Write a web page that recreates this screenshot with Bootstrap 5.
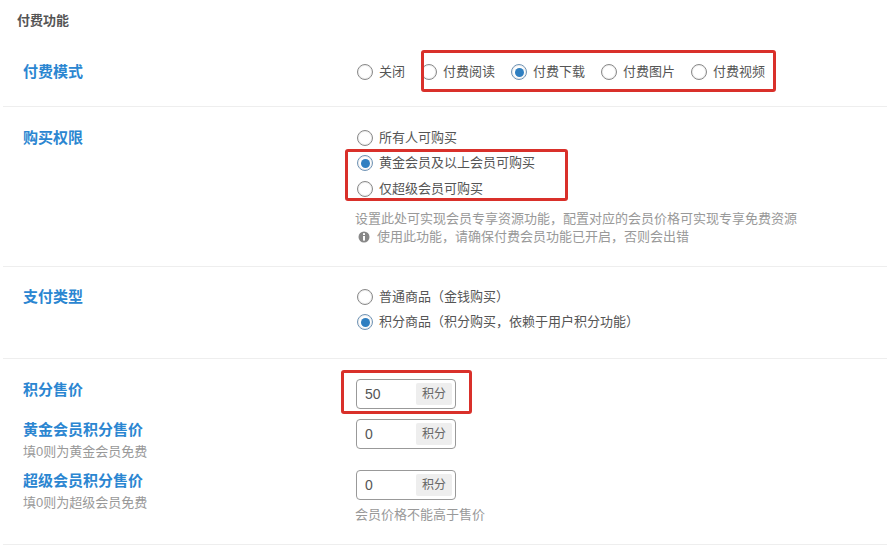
<!DOCTYPE html>
<html lang="zh">
<head>
<meta charset="utf-8">
<title>付费功能</title>
<link href="https://cdn.jsdelivr.net/npm/bootstrap@5.3.0/dist/css/bootstrap.min.css" rel="stylesheet">
<style>
html,body{height:547px;overflow:hidden;background:#fff}
body{font-family:"Liberation Sans","Noto Sans CJK SC",sans-serif;font-size:13px;color:#555;padding-left:3px}
.pg-title{font-size:13px;font-weight:700;color:#555;line-height:18px;padding:12px 0 0 14px;height:51px;margin:0}
.sec{border-bottom:1px solid #eee;display:grid;grid-template-columns:333px 1fr;padding-left:20px}
.sec-mode{height:56px;padding-top:10px}
.sec-buy{height:160px;padding-top:18px}
.sec-pay{height:92px;padding-top:17px}
.sec-price{height:186px;padding-top:20px}
.lbl{font-size:15px;font-weight:700;color:#2b86d1;line-height:22px}
.sec-buy .lbl,.sec-pay .lbl{margin-top:2px}
.sub{font-size:13px;color:#999;line-height:20px;margin-top:1px}
.opt{display:flex;align-items:center;gap:6px;height:25.5px;line-height:20px}
.rd{flex:none;width:16px;height:16px;border:1px solid #888;border-radius:50%;background:#fff;box-shadow:0 0 0 1px #eee inset;display:flex;align-items:center;justify-content:center;margin-left:1px}
.rd.on{border-color:#6f93b5}
.rd.on::after{content:"";width:9px;height:9px;border-radius:50%;background:#2f7fc1}
.optrow{display:flex;gap:15px;height:22px;align-items:center}
.hint{font-size:13px;color:#999;line-height:18px;margin-left:-1px}
.hint-a{margin-top:8px}
.ic{display:inline-block;vertical-align:-2px;margin:0 7px 0 3px}
.pr-row{display:grid;grid-template-columns:333px 1fr}
.pr-1{height:40px}
.pr-2{height:51px}
.inp{width:100px;height:30px;border:1px solid #999;border-radius:4px;display:flex;align-items:center;justify-content:space-between;padding:3px;font-size:14px;color:#555;background:#fff}
.inp>span:first-child{padding-left:5px}
.unit{width:36px;height:22px;background:#eee;border-radius:2px;color:#666;font-size:12px;line-height:22px;text-align:center}
.redbox{position:absolute;border:3px solid #d9302a;border-radius:3px;pointer-events:none}
.rb-a{left:65px;top:-11px;width:355px;height:42px}
.rb-b{left:-11px;top:24px;width:223px;height:52px}
.rb-c{left:-15px;top:-9px;width:131px;height:44px}
.rel{position:relative}
.hint-last{margin-top:6px}
</style>
</head>
<body>
<p class="pg-title">付费功能</p>

<div class="sec sec-mode">
  <div class="lbl">付费模式</div>
  <div class="rel">
    <div class="optrow">
      <div class="opt"><span class="rd"></span>关闭</div>
      <div class="opt"><span class="rd"></span>付费阅读</div>
      <div class="opt"><span class="rd on"></span>付费下载</div>
      <div class="opt"><span class="rd"></span>付费图片</div>
      <div class="opt"><span class="rd"></span>付费视频</div>
    </div>
    <div class="redbox rb-a"></div>
  </div>
</div>

<div class="sec sec-buy">
  <div class="lbl">购买权限</div>
  <div class="rel">
    <div class="opt"><span class="rd"></span>所有人可购买</div>
    <div class="opt"><span class="rd on"></span>黄金会员及以上会员可购买</div>
    <div class="opt"><span class="rd"></span>仅超级会员可购买</div>
    <div class="hint hint-a">设置此处可实现会员专享资源功能，配置对应的会员价格可实现专享免费资源</div>
    <div class="hint"><svg class="ic" width="12" height="12" viewBox="0 0 12 12"><circle cx="6" cy="6" r="5.5" fill="#888"/><rect x="5" y="2.2" width="2" height="1.8" fill="#fff"/><rect x="5" y="5" width="2" height="4.6" fill="#fff"/></svg>使用此功能，请确保付费会员功能已开启，否则会出错</div>
    <div class="redbox rb-b"></div>
  </div>
</div>

<div class="sec sec-pay">
  <div class="lbl">支付类型</div>
  <div>
    <div class="opt"><span class="rd"></span>普通商品（金钱购买）</div>
    <div class="opt"><span class="rd on"></span>积分商品（积分购买，依赖于用户积分功能）</div>
  </div>
</div>

<div class="sec sec-price d-block">
  <div class="pr-row pr-1">
    <div class="lbl">积分售价</div>
    <div class="rel">
      <div class="inp"><span>50</span><span class="unit">积分</span></div>
      <div class="redbox rb-c"></div>
    </div>
  </div>
  <div class="pr-row pr-2">
    <div><div class="lbl">黄金会员积分售价</div><div class="sub">填0则为黄金会员免费</div></div>
    <div><div class="inp"><span>0</span><span class="unit">积分</span></div></div>
  </div>
  <div class="pr-row">
    <div><div class="lbl">超级会员积分售价</div><div class="sub">填0则为超级会员免费</div></div>
    <div><div class="inp"><span>0</span><span class="unit">积分</span></div><div class="hint hint-last">会员价格不能高于售价</div></div>
  </div>
</div>
</body>
</html>
